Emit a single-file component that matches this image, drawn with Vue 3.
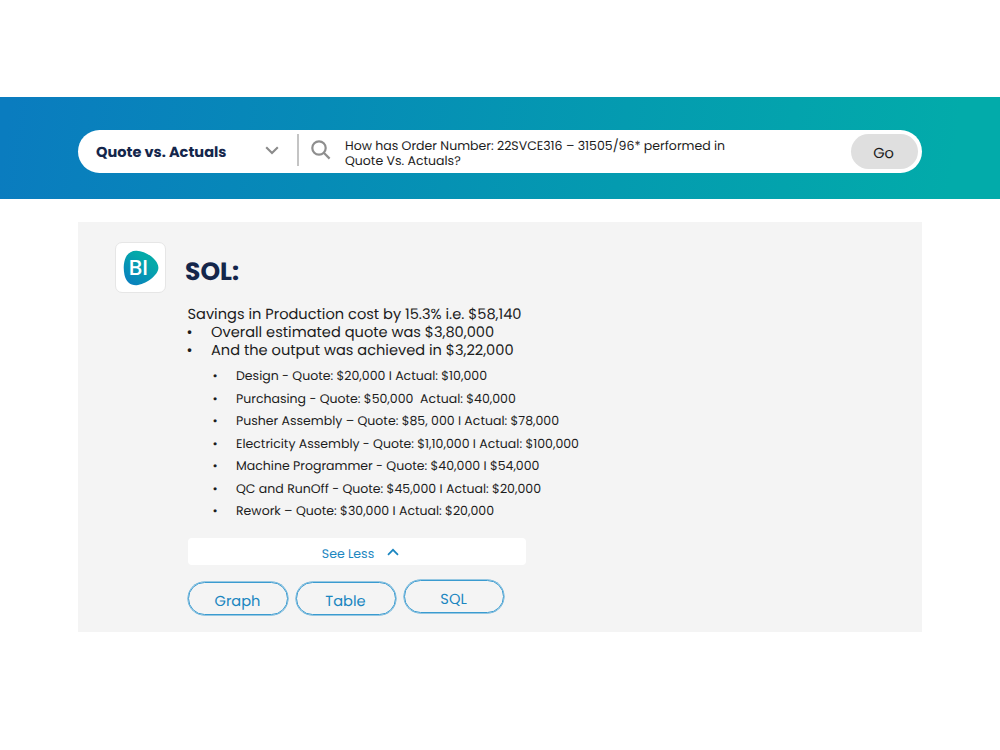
<script setup>
import { ref } from 'vue';

const category = ref('Quote vs. Actuals');

const question = [
  'How has Order Number: 22SVCE316 – 31505/96* performed in',
  'Quote Vs. Actuals?'
];

const summary = [
  { text: 'Savings in Production cost by 15.3% i.e. $58,140', bullet: false },
  { text: 'Overall estimated quote was $3,80,000', bullet: true },
  { text: 'And the output was achieved in $3,22,000', bullet: true }
];

const details = [
  'Design - Quote: $20,000 I Actual: $10,000',
  'Purchasing - Quote: $50,000  Actual: $40,000',
  'Pusher Assembly – Quote: $85, 000 I Actual: $78,000',
  'Electricity Assembly - Quote: $1,10,000 I Actual: $100,000',
  'Machine Programmer - Quote: $40,000 I $54,000',
  'QC and RunOff - Quote: $45,000 I Actual: $20,000',
  'Rework – Quote: $30,000 I Actual: $20,000'
];

const views = ['Graph', 'Table', 'SQL'];
</script>

<template>
  <div class="page">
    <header class="banner">
      <div class="search-bar">
        <div class="category">
          <span class="category-name">{{ category }}</span>
          <svg class="chevron" viewBox="0 0 14 9" width="14" height="9">
            <path d="M1.2 1.2 L7 7 L12.8 1.2" />
          </svg>
        </div>
        <div class="divider"></div>
        <svg class="search-icon" viewBox="0 0 20 20" width="20" height="20">
          <circle cx="8" cy="8" r="6.7" />
          <path d="M12.8 12.8 L18.6 18.6" />
        </svg>
        <div class="question">
          <div v-for="line in question" :key="line">{{ line }}</div>
        </div>
        <button class="go">Go</button>
      </div>
    </header>

    <main class="card">
      <div class="logo">
        <svg viewBox="0 0 36 36" width="36" height="36">
          <defs>
            <linearGradient id="blob" x1="0.1" y1="1" x2="0.8" y2="0">
              <stop offset="0" stop-color="#0a7cc0" />
              <stop offset="0.75" stop-color="#04a9a9" />
            </linearGradient>
          </defs>
          <path d="M1.3 12 C2.6 5 7 0.5 13.5 0.7 C23 1 35.4 9.5 35.4 17.8 C35.4 25.5 22 34.8 13.5 35.2 C7 35.4 3 31.5 1.5 25 C0.6 20.5 0.4 16 1.3 12 Z" fill="url(#blob)" />
          <text x="5.8" y="25.4" class="logo-text">BI</text>
        </svg>
      </div>

      <div class="answer">
        <h1>SOL:</h1>
        <ul class="summary">
          <li v-for="line in summary" :key="line.text" :class="{ bullet: line.bullet }">{{ line.text }}</li>
        </ul>
        <ul class="details">
          <li v-for="line in details" :key="line" class="bullet">{{ line }}</li>
        </ul>
        <button class="see-less">
          <span>See Less</span>
          <svg viewBox="0 0 12 8" width="12" height="8">
            <path d="M1 6.8 L6 1.8 L11 6.8" />
          </svg>
        </button>
        <div class="views">
          <button v-for="view in views" :key="view" :class="['view', view.toLowerCase()]">{{ view }}</button>
        </div>
      </div>
    </main>
  </div>
</template>

<style>
body {
  background: #fff;
}
</style>

<style scoped>
.page {
  height: 750px;
  padding-top: 97px;
  box-sizing: border-box;
  overflow: hidden;
  font-family: Poppins, Inter, sans-serif;
  text-rendering: geometricPrecision;
  color: #1c1c1c;
}

button {
  font: inherit;
  text-rendering: inherit;
  border: none;
  padding: 0;
}

.banner {
  height: 102px;
  padding: 33px 78px 0;
  box-sizing: border-box;
  background: linear-gradient(98deg, #0a7cbf 1%, #068bb7 32%, #049bb0 62%, #02abaa 95%);
}

.search-bar {
  display: flex;
  height: 42.5px;
  padding: 0 4px 0 18px;
  box-sizing: border-box;
  border-radius: 22px;
  background: #fff;
}

.category {
  display: flex;
  justify-content: space-between;
  width: 182.5px;
}

.category-name {
  line-height: 47px;
  font-size: 14.55px;
  font-weight: 700;
  color: #14264b;
  white-space: nowrap;
}

.chevron {
  margin-top: 15.5px;
  fill: none;
  stroke: #8b8b8b;
  stroke-width: 2.1;
}

.divider {
  width: 2px;
  height: 32px;
  margin: 4px 0 0 18.5px;
  background: #c4c4c4;
}

.search-icon {
  margin: 10px 0 0 12.4px;
  fill: none;
  stroke: #8e8e8e;
  stroke-width: 2.2;
}

.question {
  flex: 1;
  margin-left: 13.6px;
  padding-top: 9px;
  font-size: 12.53px;
  line-height: 15px;
  white-space: nowrap;
}

.go {
  width: 67px;
  height: 35px;
  margin-top: 4px;
  padding: 5px 2px 0 0;
  border-radius: 18px;
  background: #dfdfdf;
  color: #1c1c1c;
  font-size: 14.6px;
}

.card {
  display: flex;
  height: 410px;
  margin: 23px 78px 0;
  padding-left: 37px;
  box-sizing: border-box;
  background: #f4f4f4;
}

.logo {
  display: flex;
  align-items: center;
  justify-content: center;
  width: 51px;
  height: 51px;
  margin-top: 20px;
  box-sizing: border-box;
  border: 1.5px solid #e6e6e6;
  border-radius: 7px;
  background: #fff;
}

.logo-text {
  font-size: 21.5px;
  font-weight: 500;
  fill: #fff;
}

.answer {
  margin-left: 21.5px;
}

h1 {
  margin: 34.5px 0 0 -2.5px;
  font-size: 25px;
  line-height: 30px;
  font-weight: 700;
  color: #14264b;
}

ul {
  margin: 0;
  padding: 0;
  list-style: none;
  white-space: pre;
}

.summary {
  margin-top: 20.7px;
  font-size: 14.6px;
  line-height: 17.7px;
}

.bullet {
  display: flex;
}

.bullet::before {
  content: "•";
  width: 24.5px;
  margin-left: -1px;
}

.details {
  margin: 6.2px 0 0 25px;
  font-size: 12.53px;
  line-height: 22.5px;
}

.details .bullet::before {
  width: 23.5px;
  margin-left: 0;
}

.see-less {
  display: flex;
  align-items: center;
  justify-content: center;
  gap: 13px;
  width: 338px;
  height: 27px;
  margin-top: 14px;
  padding: 4px 0 0 8px;
  box-sizing: border-box;
  border-radius: 4px;
  background: #fff;
  color: #1b86c0;
  font-size: 12.5px;
}

.see-less span {
  padding-top: 3px;
}

.see-less svg {
  margin-bottom: 3px;
}

.see-less path {
  fill: none;
  stroke: #1b86c0;
  stroke-width: 1.7;
}

.views {
  display: flex;
  gap: 8px;
  margin-top: 17px;
}

.view {
  width: 100px;
  height: 33px;
  padding-top: 8px;
  box-sizing: border-box;
  border: 1px solid #3a9bd0;
  border-radius: 17px;
  background: transparent;
  color: #1b86c0;
  font-size: 14.6px;
  line-height: 22px;
  box-shadow: 0 0 0 0.5px #3a9bd0;
}

.sql {
  margin-top: -2px;
}
</style>
